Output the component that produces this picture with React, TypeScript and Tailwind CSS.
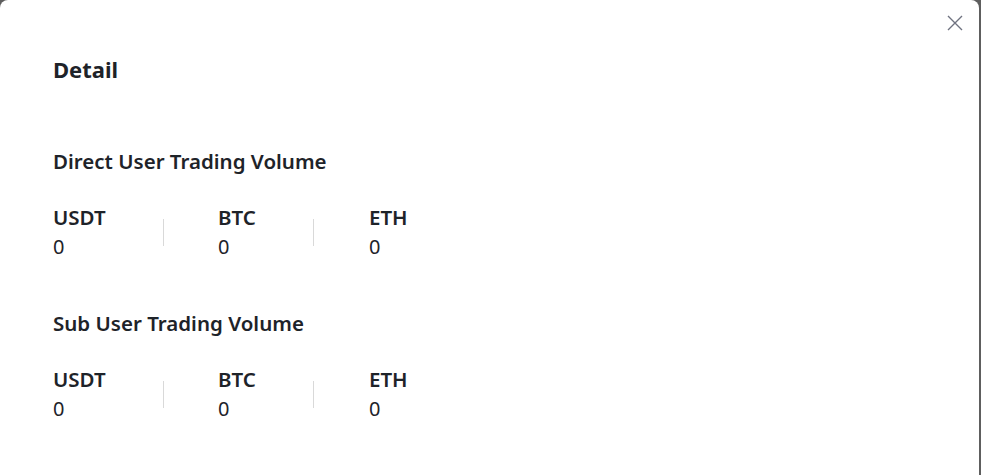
const assets = ["USDT", "BTC", "ETH"];

const VolumeRow = () => (
  <div className="mt-[28px] flex items-center">
    <div className="w-[110px]">
      <div className="text-[20.5px] font-semibold leading-[29px]">{assets[0]}</div>
      <div className="text-[20px] leading-[29px]">0</div>
    </div>
    <div className="h-[27px] w-px bg-[#d9d9d9]" />
    <div className="ml-[54px] w-[95px]">
      <div className="text-[20.5px] font-semibold leading-[29px]">{assets[1]}</div>
      <div className="text-[20px] leading-[29px]">0</div>
    </div>
    <div className="h-[27px] w-px bg-[#d9d9d9]" />
    <div className="ml-[55px]">
      <div className="text-[20.5px] font-semibold leading-[29px]">{assets[2]}</div>
      <div className="text-[20px] leading-[29px]">0</div>
    </div>
  </div>
);

export default function App() {
  return (
    <div className="h-[475px] w-[981px] overflow-hidden bg-[#5e5e5e]">
      <div
        className="relative h-[560px] w-[979px] rounded-[8px] bg-white pl-[53px] pt-[53px] text-[#1e2329]"
        style={{ fontFamily: '"Noto Sans", "Liberation Sans", sans-serif' }}
      >
        {/* close */}
        <button className="absolute right-[16px] top-[15px] flex h-[16px] w-[16px] items-center justify-center text-[#6f7280]">
          <svg width="16" height="16" viewBox="0 0 16 16" fill="none" stroke="currentColor" strokeWidth="1.4">
            <path d="M1 1L15 15M15 1L1 15" />
          </svg>
        </button>

        <h1 className="text-[22px] font-bold leading-[32px]">Detail</h1>

        <section className="mt-[62px]">
          <h2 className="text-[20.5px] font-semibold leading-[28px]">Direct User Trading Volume</h2>
          <VolumeRow />
        </section>

        <section className="mt-[48px]">
          <h2 className="text-[20.5px] font-semibold leading-[28px]">Sub User Trading Volume</h2>
          <VolumeRow />
        </section>
      </div>
    </div>
  );
}
